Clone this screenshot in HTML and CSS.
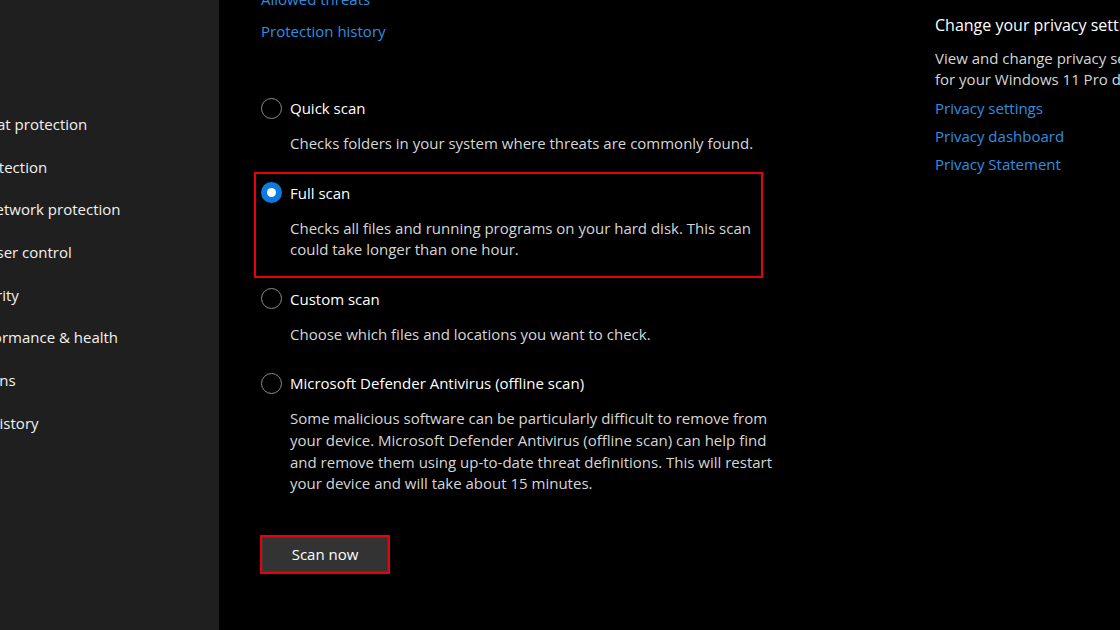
FILE: index.html
```html
<!DOCTYPE html>
<html lang="en">
<head>
<meta charset="utf-8">
<title>Scan options</title>
<link rel="stylesheet" href="styles.css">
</head>
<body>
<div class="app">
  <aside class="sidebar">
    <ul class="nav">
      <li>Virus &amp; threat protection</li>
      <li>Account protection</li>
      <li>Firewall &amp; network protection</li>
      <li>App &amp; browser control</li>
      <li>Device security</li>
      <li>Device performance &amp; health</li>
      <li>Family options</li>
      <li>Protection history</li>
    </ul>
  </aside>
  <main class="main">
    <section class="content">
      <div class="links">
        <a class="link">Allowed threats</a>
        <a class="link">Protection history</a>
      </div>
      <div class="options">
        <div class="option">
          <div class="label"><span class="radio"></span>Quick scan</div>
          <p class="desc">Checks folders in your system where threats are commonly found.</p>
        </div>
        <div class="option highlighted">
          <div class="label"><span class="radio checked"></span>Full scan</div>
          <p class="desc">Checks all files and running programs on your hard disk. This scan could take longer than one hour.</p>
        </div>
        <div class="option">
          <div class="label"><span class="radio"></span>Custom scan</div>
          <p class="desc">Choose which files and locations you want to check.</p>
        </div>
        <div class="option">
          <div class="label"><span class="radio"></span>Microsoft Defender Antivirus (offline scan)</div>
          <p class="desc">Some malicious software can be particularly difficult to remove from your device. Microsoft Defender Antivirus (offline scan) can help find and remove them using up-to-date threat definitions. This will restart your device and will take about 15 minutes.</p>
        </div>
      </div>
      <button class="scan-btn">Scan now</button>
    </section>
    <aside class="side">
      <h2 class="side-title">Change your privacy settings</h2>
      <p class="side-text">View and change privacy settings<br>for your Windows 11 Pro device.</p>
      <div class="side-links">
        <a class="link">Privacy settings</a>
        <a class="link">Privacy dashboard</a>
        <a class="link">Privacy Statement</a>
      </div>
    </aside>
  </main>
</div>
</body>
</html>
```

FILE: styles.css
```css
* { box-sizing: border-box; }
html, body {
  margin: 0;
  padding: 0;
  background: #000;
  height: 630px;
  overflow: hidden;
}
body {
  font-family: "Open Sans", "Noto Sans", sans-serif;
  font-size: 15px;
  color: #fff;
}
.app {
  display: flex;
  height: 630px;
}
.sidebar {
  width: 219px;
  flex: none;
  background: #1f1f1f;
  overflow: hidden;
}
.nav {
  list-style: none;
  margin: 0 0 0 -86px;
  padding: 103px 0 0 0;
  white-space: nowrap;
}
.nav li {
  height: 42.7px;
  line-height: 42.7px;
  color: #f2f2f2;
}
.main {
  flex: 1;
  display: flex;
  min-width: 0;
}
.content {
  width: 716px;
  flex: none;
  padding-left: 42px;
}
.links {
  display: flex;
  flex-direction: column;
  gap: 10px;
  margin-top: -12px;
}
.link {
  color: #2f8fe0;
  line-height: 22px;
  white-space: nowrap;
}
.options {
  margin-top: 55px;
  display: flex;
  flex-direction: column;
  gap: 27px;
  width: 530px;
}
.option {
  position: relative;
}
.option.highlighted::after {
  content: "";
  position: absolute;
  left: -7px;
  top: -10px;
  width: 505px;
  bottom: -17px;
  border: 2px solid #e8000b;
}
.label {
  display: flex;
  align-items: center;
  gap: 8px;
  line-height: 22px;
  color: #fff;
}
.radio {
  width: 21px;
  height: 21px;
  border-radius: 50%;
  border: 1.5px solid #8c8c8c;
  flex: none;
  display: flex;
  align-items: center;
  justify-content: center;
}
.radio.checked {
  border: none;
  background: #0a7ce0;
}
.radio.checked::before {
  content: "";
  width: 9px;
  height: 9px;
  border-radius: 50%;
  background: #fff;
}
.desc {
  margin: 14px 0 0 29px;
  line-height: 21.6px;
  color: #d6d6d6;
  width: 495px;
}
.scan-btn {
  margin-top: 42px;
  margin-left: 1px;
  width: 126px;
  height: 35px;
  background: #333;
  border: 1px solid #3c3c3c;
  outline: 2px solid #e8000b;
  outline-offset: 0;
  border-radius: 0;
  color: #fff;
  font-family: inherit;
  font-size: 15px;
  padding: 0;
}
.side {
  flex: 1;
  min-width: 0;
  overflow: hidden;
  white-space: nowrap;
  padding-top: 14px;
}
.side-title {
  margin: 0;
  font-size: 16px;
  font-weight: normal;
  line-height: 22px;
}
.side-text {
  margin: 12px 0 0 0;
  line-height: 21px;
  color: #d6d6d6;
}
.side-links {
  display: flex;
  flex-direction: column;
  gap: 6px;
  margin-top: 7px;
}
```
